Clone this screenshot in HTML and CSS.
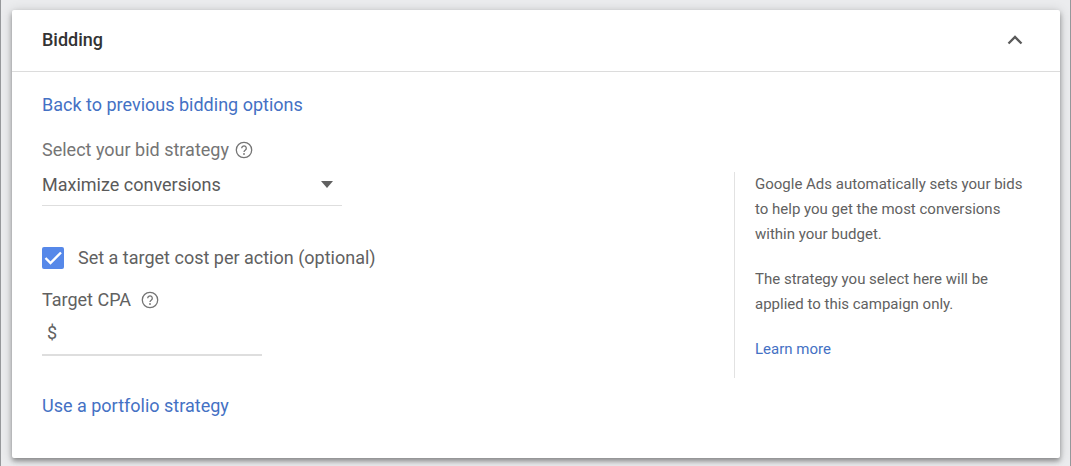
FILE: index.html
```html
<!DOCTYPE html>
<html lang="en">
<head>
<meta charset="utf-8">
<title>Bidding</title>
<link rel="stylesheet" href="styles.css">
</head>
<body>
<main class="page">
  <section class="card">
    <header class="card-header">
      <h2 class="card-title">Bidding</h2>
      <button class="collapse" type="button" aria-label="Collapse" aria-expanded="true">
        <svg width="16" height="10" viewBox="0 0 16 10" aria-hidden="true"><path d="M1.5 8.5 8 2l6.500 6.500" fill="none" stroke="#5a5a5a" stroke-width="2.300"/></svg>
      </button>
    </header>
    <div class="card-body">
      <form class="settings">
        <a class="link" href="#">Back to previous bidding options</a>
        <div class="label-row strategy-label">
          <label for="strategy">Select your bid strategy</label>
          <button class="help" type="button" aria-label="Help: bid strategy">
            <svg width="18" height="18" viewBox="0 0 18 18" aria-hidden="true"><circle cx="9" cy="9" r="7.700" fill="none" stroke="#757575" stroke-width="1.300"/><path d="M6.700 7.300a2.300 2.300 0 1 1 3.700 1.800C9.500 9.800 9 10.200 9 11" fill="none" stroke="#757575" stroke-width="1.300"/><circle cx="9" cy="13" r=".9" fill="#757575"/></svg>
          </button>
        </div>
        <div class="select-wrap">
          <select class="select" id="strategy">
            <option>Maximize conversions</option>
          </select>
          <svg class="arrow" width="12" height="7" viewBox="0 0 12 7" aria-hidden="true"><path d="M0 0h12L6 7z" fill="#616161"/></svg>
        </div>
        <div class="check-row">
          <input class="check" type="checkbox" id="set-target" checked>
          <label for="set-target">Set a target cost per action (optional)</label>
        </div>
        <div class="label-row cpa-label">
          <label for="cpa">Target CPA</label>
          <button class="help" type="button" aria-label="Help: target CPA">
            <svg width="18" height="18" viewBox="0 0 18 18" aria-hidden="true"><circle cx="9" cy="9" r="7.700" fill="none" stroke="#757575" stroke-width="1.300"/><path d="M6.700 7.300a2.300 2.300 0 1 1 3.700 1.800C9.500 9.800 9 10.200 9 11" fill="none" stroke="#757575" stroke-width="1.300"/><circle cx="9" cy="13" r=".9" fill="#757575"/></svg>
          </button>
        </div>
        <div class="money">
          <span>$</span>
          <input class="money-input" id="cpa" type="text" inputmode="decimal">
        </div>
        <a class="link" href="#">Use a portfolio strategy</a>
      </form>
      <aside class="info">
        <p>Google Ads automatically sets your bids to help you get the most conversions within your budget.</p>
        <p>The strategy you select here will be applied to this campaign only.</p>
        <a class="link" href="#">Learn more</a>
      </aside>
    </div>
  </section>
</main>
</body>
</html>
```
FILE: styles.css
```css
* {
  box-sizing: border-box;
}

body {
  margin: 0;
  background: #ebecee;
  color: #616161;
  font: 18px/24px Roboto, sans-serif;
}

.page {
  min-height: 100vh;
  padding: 10px 10px 8px 11px;
  border: solid #96989b;
  border-width: 0 1px;
}

.card {
  background: #fff;
  border-radius: 2px;
  box-shadow: 0 3px 5px rgba(0, 0, 0, 0.36), 0 1px 12px rgba(0, 0, 0, 0.16);
}

.card-header {
  display: flex;
  align-items: center;
  justify-content: space-between;
  height: 62px;
  padding: 0 37px 1px 30px;
  border-bottom: 1px solid #dcdcdc;
}

.card-title {
  margin: 0;
  color: #333;
  font-size: 18px;
  font-weight: 500;
}

button {
  display: flex;
  padding: 0;
  border: 0;
  background: none;
}

.card-body {
  display: flex;
  justify-content: space-between;
  padding: 21px 34px 40px 30px;
}

.settings {
  display: flex;
  flex-direction: column;
  align-items: flex-start;
}

.link {
  color: #4471c4;
  text-decoration: none;
}

.label-row {
  display: flex;
  align-items: center;
  gap: 10px;
}

.strategy-label {
  gap: 6px;
  margin-top: 21px;
  color: #757575;
}

.select-wrap {
  position: relative;
  width: 300px;
  margin-top: 10px;
}

.select {
  display: block;
  width: 100%;
  height: 34px;
  padding: 0 0 8px;
  border: 0;
  border-bottom: 1px solid #dedede;
  border-radius: 0;
  background: none;
  color: #5a5a5a;
  font: inherit;
  appearance: none;
}

.arrow {
  position: absolute;
  top: 9px;
  right: 9px;
  pointer-events: none;
}

.check-row {
  display: flex;
  align-items: center;
  gap: 14px;
  margin-top: 40px;
}

.check {
  width: 22px;
  height: 22px;
  margin: 0;
  border-radius: 2px;
  background: #5688e9 url("data:image/svg+xml,%3Csvg xmlns='http://www.w3.org/2000/svg' viewBox='0 0 22 22'%3E%3Cpath d='M3.500 11l5 5L19 5.500' fill='none' stroke='white' stroke-width='2.400'/%3E%3C/svg%3E");
  appearance: none;
}

.cpa-label {
  margin-top: 18px;
}

.money {
  display: flex;
  width: 220px;
  margin: 9px 0 38px;
  padding: 0 0 9px 5px;
  border-bottom: 2px solid #dedede;
}

.money-input {
  flex: 1;
  min-width: 0;
  height: 24px;
  padding: 0 6px;
  border: 0;
  background: none;
  color: inherit;
  font: inherit;
}

.info {
  align-self: flex-start;
  width: 292px;
  margin-top: 79px;
  padding: 0 0 16px 20px;
  border-left: 1px solid #e2e2e2;
  font-size: 15px;
  line-height: 25px;
}

.info p {
  margin: 0 0 20px;
}
```
